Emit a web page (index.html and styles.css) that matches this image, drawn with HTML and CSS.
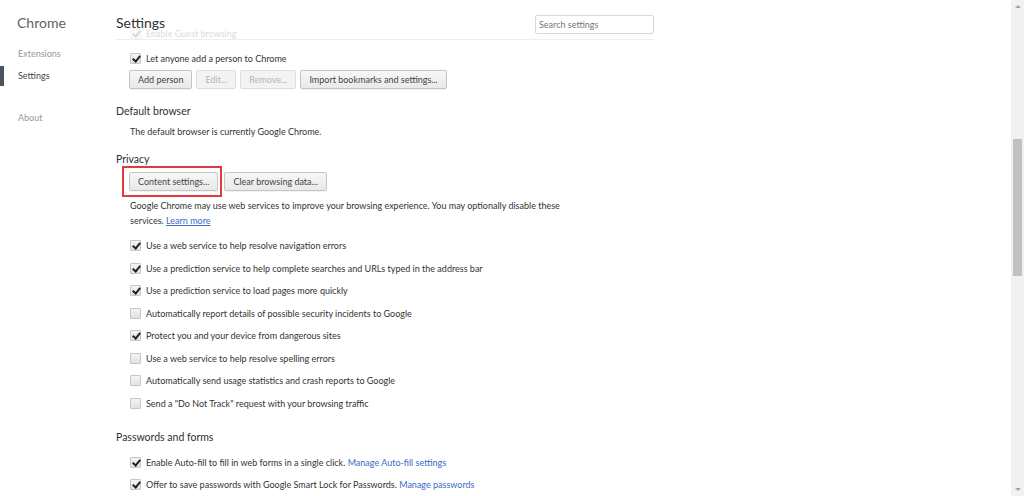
FILE: index.html
```html
<!DOCTYPE html>
<html lang="en">
<head>
  <meta charset="UTF-8">
  <title>Settings</title>
  <link rel="stylesheet" href="styles.css">
</head>
<body>

  <div class="sidebar">
    <h1>Chrome</h1>
    <ul class="nav">
      <li>Extensions</li>
      <li class="selected">Settings</li>
      <li class="about">About</li>
    </ul>
  </div>

  <div class="page">
    <div class="page-header">
      <div class="header-row">
        <h2>Settings</h2>
        <input type="text" class="search" placeholder="Search settings">
      </div>
      <div class="ghost">
        <div class="check-row"><span class="box checked"></span><span>Enable Guest browsing</span></div>
      </div>
    </div>

    <div class="section people">
      <div class="check-row"><span class="box checked"></span><span>Let anyone add a person to Chrome</span></div>
      <div class="buttons">
        <button>Add person</button>
        <button disabled>Edit...</button>
        <button disabled>Remove...</button>
        <button>Import bookmarks and settings...</button>
      </div>
    </div>

    <h3 class="default-title">Default browser</h3>
    <div class="section">
      <p class="plain">The default browser is currently Google Chrome.</p>
    </div>

    <h3 class="privacy-title">Privacy</h3>
    <div class="section">
      <div class="buttons privacy-buttons">
        <span class="highlight"><button>Content settings...</button></span>
        <button>Clear browsing data...</button>
      </div>
      <p class="note">Google Chrome may use web services to improve your browsing experience. You may optionally disable these services. <a href="#">Learn more</a></p>
      <div class="check-list">
        <div class="check-row"><span class="box checked"></span><span>Use a web service to help resolve navigation errors</span></div>
        <div class="check-row"><span class="box checked"></span><span>Use a prediction service to help complete searches and URLs typed in the address bar</span></div>
        <div class="check-row"><span class="box checked"></span><span>Use a prediction service to load pages more quickly</span></div>
        <div class="check-row"><span class="box"></span><span>Automatically report details of possible security incidents to Google</span></div>
        <div class="check-row"><span class="box checked"></span><span>Protect you and your device from dangerous sites</span></div>
        <div class="check-row"><span class="box"></span><span>Use a web service to help resolve spelling errors</span></div>
        <div class="check-row"><span class="box"></span><span>Automatically send usage statistics and crash reports to Google</span></div>
        <div class="check-row"><span class="box"></span><span>Send a "Do Not Track" request with your browsing traffic</span></div>
      </div>
    </div>

    <h3 class="forms-title">Passwords and forms</h3>
    <div class="section">
      <div class="check-list forms-list">
        <div class="check-row"><span class="box checked"></span><span>Enable Auto-fill to fill in web forms in a single click. <a href="#" class="inline-link">Manage Auto-fill settings</a></span></div>
        <div class="check-row"><span class="box checked"></span><span>Offer to save passwords with Google Smart Lock for Passwords. <a href="#" class="inline-link">Manage passwords</a></span></div>
      </div>
    </div>
  </div>

  <div class="filler"></div>

  <div class="scrollbar">
    <span class="arrow up"></span>
    <div class="track"><div class="thumb"></div></div>
    <span class="arrow down"></span>
  </div>

</body>
</html>
```

FILE: styles.css
```css
html, body {
  height: 100%;
}
body {
  margin: 0;
  display: flex;
  font-family: Lato, "Open Sans", sans-serif;
  font-size: 9px;
  color: #333;
  background: #fff;
  overflow: hidden;
}

/* left navigation */
.sidebar {
  width: 116px;
  flex-shrink: 0;
}
.sidebar h1 {
  margin: 13px 0 0 17px;
  font-size: 14px;
  font-weight: normal;
  color: #5c6166;
  line-height: 20px;
}
.nav {
  list-style: none;
  margin: 10px 0 0;
  padding: 0;
}
.nav li {
  height: 22px;
  line-height: 22px;
  color: #999;
  border-left: 4px solid transparent;
  padding-left: 14px;
}
.nav li.selected {
  color: #464a4f;
  border-left-color: #4b5260;
  height: 20px;
  line-height: 20px;
  margin-top: 1px;
}
.nav li.about {
  margin-top: 21px;
}

/* main column */
.page {
  width: 538px;
  flex-shrink: 0;
}
.page-header {
  height: 39px;
  border-bottom: 1px solid #eee;
  overflow: hidden;
}
.header-row {
  display: flex;
  justify-content: space-between;
  align-items: flex-start;
  height: 26px;
}
.header-row h2 {
  margin: 13px 0 0;
  font-size: 14px;
  font-weight: normal;
  color: #333;
  line-height: 20px;
}
.search {
  margin-top: 15px;
  width: 119px;
  height: 19px;
  box-sizing: border-box;
  border: 1px solid #d9d9d9;
  border-radius: 2px;
  padding: 0 3px;
  font-family: inherit;
  font-size: 9px;
  color: #333;
}
.search::placeholder {
  color: #777;
}
.ghost {
  opacity: 0.18;
  padding-left: 14px;
}
.ghost .check-row {
  height: 14px;
}

.section {
  padding-left: 14px;
}
.people {
  padding-top: 7px;
}
.check-row {
  display: flex;
  align-items: center;
  height: 22.5px;
  white-space: nowrap;
}
.box {
  width: 9px;
  height: 9px;
  border: 1px solid #c6c6c6;
  border-radius: 1px;
  background: linear-gradient(#f4f4f4, #e2e2e2);
  margin-right: 5px;
  position: relative;
  flex-shrink: 0;
}
.box.checked::after {
  content: "";
  position: absolute;
  left: 3px;
  top: 0;
  width: 3px;
  height: 6px;
  border: solid #222;
  border-width: 0 2px 2px 0;
  transform: rotate(40deg);
}

.buttons {
  display: flex;
  gap: 4px;
  margin-left: -1px;
}
button {
  height: 19px;
  padding: 0 8px;
  font-family: inherit;
  font-size: 9px;
  color: #444;
  border: 1px solid #c5c5c5;
  border-radius: 2px;
  background: linear-gradient(#f7f7f7, #e9e9e9);
  box-shadow: 0 1px 0 rgba(0,0,0,0.05);
}
button:disabled {
  color: #b5b5b5;
  border-color: #dcdcdc;
  background: #f3f3f3;
  box-shadow: none;
}

h3 {
  margin: 16px 0 0;
  font-size: 10.5px;
  font-weight: normal;
  color: #303030;
  line-height: 15px;
}
.default-title {
  margin-top: 15px;
}
.plain {
  margin: 5px 0 0;
  line-height: 15px;
}
.privacy-title {
  margin-top: 13px;
}
.privacy-buttons {
  margin-top: 5px;
  gap: 6px;
}
.highlight {
  position: relative;
}
.highlight::after {
  content: "";
  position: absolute;
  left: -7px;
  top: -6px;
  right: -4px;
  bottom: -6px;
  border: 2px solid #e0393e;
}
.note {
  margin: 7px 0 0;
  width: 440px;
  line-height: 15px;
}
a {
  color: #3b6ac9;
}
.inline-link {
  text-decoration: none;
}
.check-list {
  margin-top: 7px;
}
.forms-title {
  margin-top: 15px;
}
.forms-list {
  margin-top: 7px;
}
.forms-list .check-row {
  height: 22px;
}

.filler {
  flex: 1;
}

/* window scrollbar */
.scrollbar {
  width: 13px;
  flex-shrink: 0;
  background: #f1f1f1;
  display: flex;
  flex-direction: column;
  align-items: center;
}
.track {
  flex: 1;
  width: 100%;
}
.thumb {
  width: 9px;
  height: 137px;
  margin: 126px auto 0;
  background: #c1c1c1;
}
.arrow {
  width: 0;
  height: 0;
  border-left: 3px solid transparent;
  border-right: 3px solid transparent;
  margin: 5px 0;
}
.arrow.up {
  border-bottom: 3px solid #a3a3a3;
}
.arrow.down {
  border-top: 3px solid #a3a3a3;
}
```
